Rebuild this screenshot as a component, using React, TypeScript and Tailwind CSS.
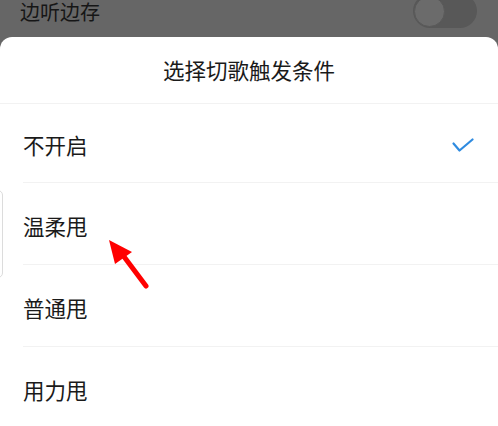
import React from "react";

const options = ["不开启", "温柔甩", "普通甩", "用力甩"];

export default function App() {
  return (
    <div
      className="relative w-[498px] h-[426px] overflow-hidden bg-[#666666]"
      style={{ fontFamily: '"Noto Sans CJK SC", "Noto Sans", sans-serif' }}
    >
      <div className="flex h-[37px] items-start justify-between pl-[20px] pr-[21px]">
        <span className="mt-0 text-[20px] leading-[23px] text-[#161616]">边听边存</span>
        <div className="-mt-[6px] flex h-[34px] w-[64px] items-center rounded-full bg-[#585858] pl-[1px]">
          <div className="h-[31px] w-[31px] rounded-full border border-[#5a5a5a] bg-[#6b6b6b]" />
        </div>
      </div>
      <div className="relative h-[389px] rounded-t-[12px] bg-white">
        <div className="flex h-[67px] items-center justify-center border-b border-[#f2f2f2] text-[21.5px] text-[#1a1a1a]">
          选择切歌触发条件
        </div>
        <div className="flex flex-col pl-[23px]">
          {options.map((o, i) => (
            <div
              key={o}
              className={`flex items-center justify-between pt-[5px] pr-[24px] ${
                i === 0 ? "h-[79px]" : "h-[82px]"
              } ${i < 3 ? "border-b border-[#f2f2f2]" : ""}`}
            >
              <span className="text-[21.5px] text-[#1a1a1a]">{o}</span>
              {i === 0 && (
                <svg width="22" height="15" viewBox="0 0 22 15" fill="none">
                  <path
                    d="M1.5 5.5 L7.5 12.5 L20.5 1.5"
                    stroke="#2f8be0"
                    strokeWidth="2.2"
                    strokeLinecap="round"
                    strokeLinejoin="round"
                  />
                </svg>
              )}
            </div>
          ))}
        </div>
        <div className="absolute left-[-12px] top-[153px] h-[88px] w-[15px] rounded-[5px] border border-[#dcdcdc] bg-white" />
        <svg
          className="absolute left-0 top-0"
          width="498"
          height="389"
          viewBox="0 37 498 389"
        >
          <line x1="146" y1="286" x2="122" y2="254" stroke="#ff0000" strokeWidth="5" strokeLinecap="round" />
          <polygon points="109,240 132,252 115,264" fill="#ff0000" />
        </svg>
      </div>
    </div>
  );
}
